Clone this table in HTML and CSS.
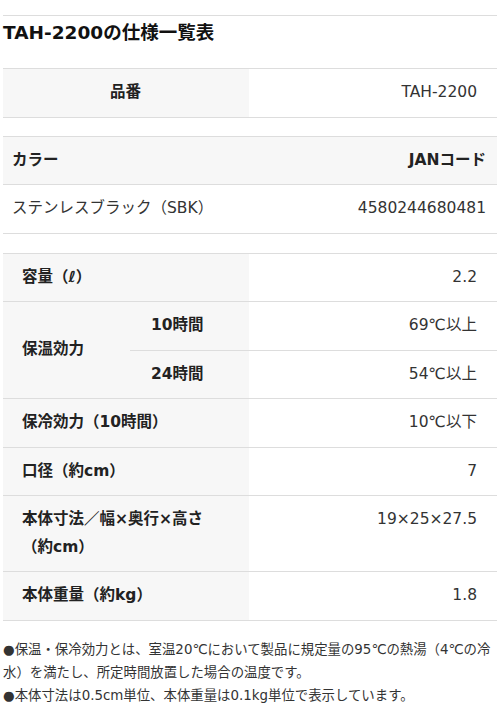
FILE: index.html
```html
<!DOCTYPE html>
<html lang="ja">
<head>
<meta charset="utf-8">
<title>TAH-2200の仕様一覧表</title>
<link rel="stylesheet" href="styles.css">
</head>
<body>
<div class="page">
  <h2 class="title">TAH-2200の仕様一覧表</h2>

  <table class="spec spec-model">
    <colgroup><col class="c-half-l"><col class="c-half-r"></colgroup>
    <tr>
      <th class="label center">品番</th>
      <td class="value">TAH-2200</td>
    </tr>
  </table>

  <table class="spec spec-color">
    <colgroup><col class="c-half-l"><col class="c-half-r"></colgroup>
    <tr class="head">
      <th class="left">カラー</th>
      <th class="right">JANコード</th>
    </tr>
    <tr>
      <td class="left">ステンレスブラック（SBK）</td>
      <td class="right">4580244680481</td>
    </tr>
  </table>

  <table class="spec spec-main">
    <colgroup><col class="c-a"><col class="c-b"><col class="c-c"></colgroup>
    <tr>
      <th class="label" colspan="2">容量（ℓ）</th>
      <td class="value">2.2</td>
    </tr>
    <tr>
      <th class="label" rowspan="2">保温効力</th>
      <th class="label sub">10時間</th>
      <td class="value">69℃以上</td>
    </tr>
    <tr>
      <th class="label sub">24時間</th>
      <td class="value">54℃以上</td>
    </tr>
    <tr>
      <th class="label" colspan="2">保冷効力（10時間）</th>
      <td class="value">10℃以下</td>
    </tr>
    <tr>
      <th class="label" colspan="2">口径（約cm）</th>
      <td class="value">7</td>
    </tr>
    <tr>
      <th class="label" colspan="2">本体寸法／幅×奥行×高さ（約cm）</th>
      <td class="value top">19×25×27.5</td>
    </tr>
    <tr>
      <th class="label" colspan="2">本体重量（約kg）</th>
      <td class="value">1.8</td>
    </tr>
  </table>

  <div class="notes">
    <p>●保温・保冷効力とは、室温20℃において製品に規定量の95℃の熱湯（4℃の冷水）を満たし、所定時間放置した場合の温度です。</p>
    <p>●本体寸法は0.5cm単位、本体重量は0.1kg単位で表示しています。</p>
  </div>
</div>
</body>
</html>
```

FILE: styles.css
```css
html, body {
  margin: 0;
  padding: 0;
  background: #ffffff;
}

body {
  font-family: "DejaVu Sans", "Noto Sans CJK JP", sans-serif;
  color: #333333;
}

.page {
  padding: 0 3px;
}

.title {
  margin: 15px 0 0;
  padding-top: 4px;
  border-top: 1px solid #dddddd;
  font-size: 18.5px;
  line-height: 26px;
  font-weight: bold;
  color: #111111;
}

.spec {
  width: 100%;
  table-layout: fixed;
  border-collapse: separate;
  border-spacing: 0;
  border-top: 1px solid #dddddd;
  font-size: 15.5px;
  line-height: 27.5px;
}

.spec th,
.spec td {
  padding: 10px 20px 10px 19px;
  border-bottom: 1px solid #dddddd;
  vertical-align: middle;
  text-align: left;
}

.spec th {
  font-weight: bold;
  color: #222222;
}

.spec td {
  font-weight: normal;
  color: #333333;
}

.spec-model {
  margin-top: 22px;
}

.spec-color {
  margin-top: 18px;
}

.spec-main {
  margin-top: 19px;
}

.c-half-l { width: 246px; }
.c-half-r { width: 248px; }
.c-a { width: 127px; }
.c-b { width: 119px; }
.c-c { width: 248px; }

.spec .label {
  background: #f7f7f7;
}

.spec .center {
  text-align: center;
}

.spec .value {
  text-align: right;
}

.spec .value.top {
  vertical-align: top;
}

.spec .sub {
  padding-left: 21px;
}

.spec-color .head th {
  background: #f7f7f7;
}

.spec-color .left {
  padding-left: 9px;
  text-align: left;
}

.spec-color .right {
  padding-right: 11px;
  text-align: right;
}

.notes {
  margin-top: 17px;
  font-size: 13.4px;
  line-height: 23px;
  color: #333333;
}

.notes p {
  margin: 0;
}
```
